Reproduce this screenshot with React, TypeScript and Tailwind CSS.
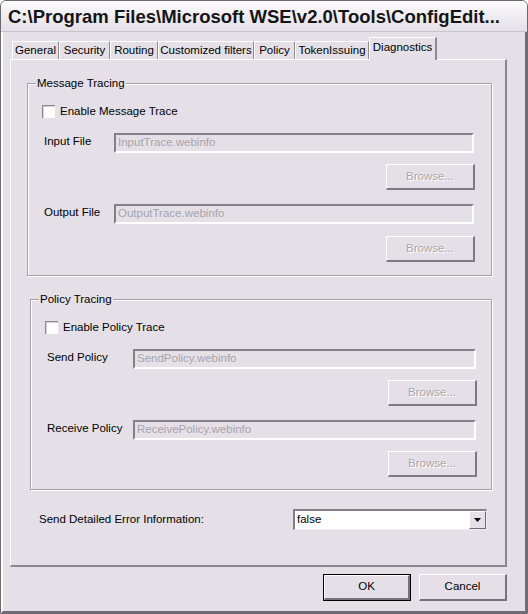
import React from "react";

const FONT = { fontFamily: '"Liberation Sans", Arial, sans-serif' };

const tabs = [
  { label: "General", w: "w-[47px]" },
  { label: "Security", w: "w-[51px]" },
  { label: "Routing", w: "w-[48px]" },
  { label: "Customized filters", w: "w-[96px]" },
  { label: "Policy", w: "w-[41px]" },
  { label: "TokenIssuing", w: "w-[74px]" },
];

function Checkbox({ label }: { label: string }) {
  return (
    <div className="flex items-center h-[13px]">
      <div className="w-[13px] h-[13px] bg-white border-t border-l border-[#8a868d] border-r-white border-b-white shadow-[inset_1px_1px_0_#d6d2d9]" />
      <span className="ml-[5px] text-[11.5px] text-black leading-none">{label}</span>
    </div>
  );
}

function Field({ label, value, labelW, fieldW }: { label: string; value: string; labelW: string; fieldW: string }) {
  return (
    <div className="flex items-start">
      <div className={`${labelW} pl-[2px] pt-[1px] text-[11.5px] leading-[14px] text-black`}>{label}</div>
      <div
        className={`${fieldW} h-[20px] flex items-center pl-[2px] border-t-2 border-l-2 border-[#84808a] border-r-2 border-b-2 border-r-white border-b-white text-[11.5px] text-[#a7a3ab]`}
      >
        {value}
      </div>
    </div>
  );
}

function Browse() {
  return (
    <div className="flex justify-end">
      <div className="w-[89px] h-[26px] flex items-center justify-center border-t border-l border-white border-r-2 border-b-2 border-r-[#7d7a80] border-b-[#7d7a80] text-[11.5px] text-[#aaa5ad] [text-shadow:1px_1px_0_#fff]">
        Browse...
      </div>
    </div>
  );
}

function Group({ title, className, children }: { title: string; className: string; children: React.ReactNode }) {
  return (
    <div className={`relative border border-[#a3a0a7] shadow-[inset_1px_1px_0_#fff,1px_1px_0_#fff] ${className}`}>
      <span className="absolute -top-[8px] left-[8px] px-[1px] bg-[#e5e0e7] text-[11.5px] leading-[14px] text-black">
        {title}
      </span>
      {children}
    </div>
  );
}

function WinButton({ label, isDefault }: { label: string; isDefault?: boolean }) {
  return (
    <div className={`w-[88px] h-[27px] ${isDefault ? "border border-black" : ""}`}>
      <div className="w-full h-full flex items-center justify-center border-t border-l border-white border-r-2 border-b-2 border-r-[#76737a] border-b-[#76737a] text-[11.5px] text-black">
        {label}
      </div>
    </div>
  );
}

export default function App() {
  return (
    <div style={FONT} className="w-[528px] h-[614px] flex flex-col bg-[#e5e0e7] border border-[#6c6a70] rounded-t-[6px] overflow-hidden">
      <div className="h-[31px] flex items-center pl-[7px] pt-[2px] bg-gradient-to-b from-[#fbfafc] to-[#e4e0e7] border-b border-[#c7c3ca]">
        <span className="text-[18.5px] font-bold text-[#151515] whitespace-nowrap">
          C:\Program Files\Microsoft WSE\v2.0\Tools\ConfigEdit...
        </span>
      </div>

      <div className="flex-1 flex flex-col pt-[5px] border-l-2 border-r-2 border-b-2 border-l-white border-r-[#6f6c73] border-b-[#6f6c73]">
        <div className="flex items-end h-[22px] ml-[9px]">
          {tabs.map((t) => (
            <div
              key={t.label}
              className={`${t.w} h-[18px] flex items-center justify-center border-l border-l-white border-r border-r-[#8d8a90] border-t border-t-white text-[11.5px] text-black whitespace-nowrap`}
            >
              {t.label}
            </div>
          ))}
          <div className="relative z-10 w-[68px] h-[23px] -mb-[1px] pb-[3px] flex items-center justify-center bg-[#e5e0e7] border-l border-t border-white border-r-2 border-r-[#8d8a90] text-[11.5px] text-black">
            Diagnostics
          </div>
        </div>

        <div className="ml-[7px] w-[497px] h-[508px] flex flex-col border-t border-l border-white border-r-2 border-b-2 border-r-[#8a878d] border-b-[#8a878d]">
          <Group title="Message Tracing" className="ml-[16px] mt-[23px] w-[465px] h-[193px]">
            <div className="pl-[14px] pt-[21px] flex flex-col">
              <Checkbox label="Enable Message Trace" />
              <div className="mt-[15px] pr-[17px]">
                <Field label="Input File" value="InputTrace.webinfo" labelW="w-[72px]" fieldW="w-[360px]" />
              </div>
              <div className="mt-[11px] pr-[16px]">
                <Browse />
              </div>
              <div className="mt-[14px] pr-[17px]">
                <Field label="Output File" value="OutputTrace.webinfo" labelW="w-[72px]" fieldW="w-[360px]" />
              </div>
              <div className="mt-[12px] pr-[16px]">
                <Browse />
              </div>
            </div>
          </Group>

          <Group title="Policy Tracing" className="ml-[19px] mt-[23px] w-[462px] h-[191px]">
            <div className="pl-[14px] pt-[21px] flex flex-col">
              <Checkbox label="Enable Policy Trace" />
              <div className="mt-[15px] pr-[15px]">
                <Field label="Send Policy" value="SendPolicy.webinfo" labelW="w-[88px]" fieldW="w-[343px]" />
              </div>
              <div className="mt-[11px] pr-[14px]">
                <Browse />
              </div>
              <div className="mt-[14px] pr-[15px]">
                <Field label="Receive Policy" value="ReceivePolicy.webinfo" labelW="w-[88px]" fieldW="w-[343px]" />
              </div>
              <div className="mt-[11px] pr-[14px]">
                <Browse />
              </div>
            </div>
          </Group>

          <div className="flex items-center mt-[19px] ml-[28px]">
            <span className="w-[254px] text-[11.5px] text-black">Send Detailed Error Information:</span>
            <div className="w-[194px] h-[21px] flex items-center bg-white border-t-2 border-l-2 border-[#84808a] border-r border-b border-r-[#eeeaf0] border-b-[#eeeaf0]">
              <span className="flex-1 pl-[2px] text-[11.5px] text-black">false</span>
              <div className="w-[17px] h-full flex items-center justify-center bg-[#e5e0e7] border-t border-l border-white border-r border-b border-r-[#6f6c73] border-b-[#6f6c73]">
                <svg width="7" height="4" viewBox="0 0 7 4">
                  <path d="M0 0h7L3.5 4z" fill="#000" />
                </svg>
              </div>
            </div>
          </div>
        </div>

        <div className="flex justify-end gap-[8px] mt-[7px] mr-[18px]">
          <WinButton label="OK" isDefault />
          <WinButton label="Cancel" />
        </div>
      </div>
    </div>
  );
}
